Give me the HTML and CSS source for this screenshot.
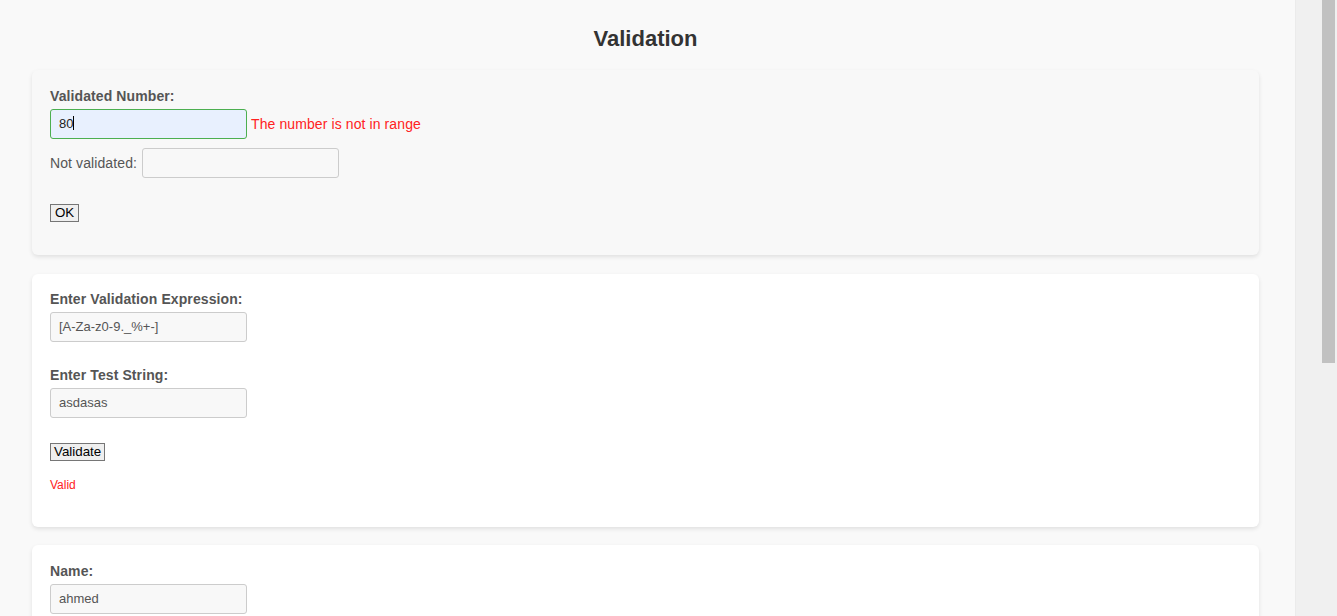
FILE: index.html
```html
<!DOCTYPE html>
<html lang="en">
<head>
<meta charset="utf-8">
<title>Validation</title>
<link rel="stylesheet" href="styles.css">
</head>
<body>
<div class="viewport">
  <main class="page">
    <h1 class="title">Validation</h1>

    <section class="card card-muted">
      <label class="label">Validated Number:</label>
      <div class="row">
        <span class="input input-focus">80<span class="caret"></span></span>
        <span class="error">The number is not in range</span>
      </div>
      <div class="row row-plain">
        <span class="plain-label">Not validated:</span>
        <span class="input"></span>
      </div>
      <button class="btn btn-ok" type="button">OK</button>
    </section>

    <section class="card card-regex">
      <label class="label">Enter Validation Expression:</label>
      <span class="input">[A-Za-z0-9._%+-]</span>
      <label class="label label-gap">Enter Test String:</label>
      <span class="input">asdasas</span>
      <button class="btn btn-validate" type="button">Validate</button>
      <p class="result">Valid</p>
    </section>

    <section class="card card-name">
      <label class="label">Name:</label>
      <span class="input">ahmed</span>
    </section>
  </main>
  <div class="scrollbar"><div class="thumb"></div></div>
</div>
</body>
</html>
```

FILE: styles.css
```css
html, body {
  margin: 0;
  padding: 0;
  height: 616px;
  overflow: hidden;
}

body {
  font-family: "Liberation Sans", Arial, sans-serif;
  background: #f9f9f9;
  color: #333;
}

.viewport {
  display: flex;
  height: 616px;
}

.page {
  width: 1295px;
  flex: none;
  background: #f9f9f9;
  padding: 27px 36px 0 32px;
  box-sizing: border-box;
  overflow: hidden;
}

.title {
  margin: 0 0 19px 0;
  font-size: 22px;
  line-height: 24px;
  font-weight: bold;
  text-align: center;
  color: #333;
}

.card {
  background: #fff;
  border-radius: 6px;
  box-shadow: 0 2px 4px rgba(0, 0, 0, 0.1);
  padding: 17px 18px 18px 18px;
  margin-bottom: 19px;
}

.card-muted {
  background: #f8f8f8;
  padding-top: 18px;
  padding-bottom: 33px;
}

.card-regex {
  margin-bottom: 18px;
}

.card-name {
  padding-top: 18px;
}

.label {
  display: block;
  font-size: 14px;
  line-height: 17px;
  font-weight: bold;
  color: #555;
  margin-bottom: 4px;
  letter-spacing: 0.1px;
}

.label-gap {
  margin-top: 25px;
}

.input {
  display: inline-block;
  box-sizing: border-box;
  width: 197px;
  height: 30px;
  border: 1px solid #ccc;
  border-radius: 3px;
  background: #f8f8f8;
  padding: 0 8px;
  font-size: 13px;
  line-height: 28px;
  color: #555;
  vertical-align: middle;
  white-space: nowrap;
}

.input-focus {
  border-color: #4caf50;
  background: #e8f0fe;
  color: #222;
}

.caret {
  display: inline-block;
  width: 1px;
  height: 14px;
  background: #000;
  vertical-align: -2px;
}

.row {
  display: flex;
  align-items: center;
  gap: 4px;
}

.row-plain {
  margin-top: 9px;
  gap: 5px;
}

.error {
  font-size: 14px;
  color: #f22;
  letter-spacing: 0.1px;
}

.plain-label {
  font-size: 14px;
  color: #555;
  letter-spacing: 0.1px;
}

.btn {
  display: block;
  font-family: "Liberation Sans", Arial, sans-serif;
  font-size: 13.33px;
  line-height: 16px;
  height: 18px;
  padding: 0 3px;
  border: 1px solid #767676;
  border-radius: 0;
  background: #efefef;
  color: #000;
}

.btn-ok {
  margin-top: 26px;
  padding: 0 4px;
}

.btn-validate {
  margin-top: 25px;
  padding: 0 3px;
}

.result {
  margin: 17px 0 17px 0;
  font-size: 12px;
  line-height: 14px;
  color: #f22;
}

.scrollbar {
  flex: 1;
  background: #f0f0f0;
  display: flex;
  justify-content: flex-end;
  padding-right: 2px;
  border-left: 1px solid #ebebeb;
}

.thumb {
  width: 13px;
  height: 363px;
  background: #c1c1c1;
}
```
